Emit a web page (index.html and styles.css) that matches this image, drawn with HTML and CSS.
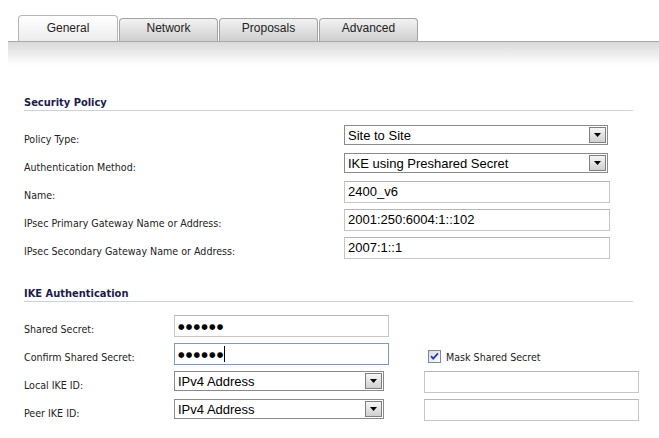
FILE: index.html
```html
<!DOCTYPE html>
<html>
<head>
<meta charset="utf-8">
<link rel="stylesheet" href="styles.css">
</head>
<body>
<div class="tabs">
  <div class="tab active">General</div>
  <div class="tab">Network</div>
  <div class="tab">Proposals</div>
  <div class="tab">Advanced</div>
</div>
<div class="tabbar"></div>

<div class="content">
  <div class="section-head first">Security Policy</div>
  <div class="rows policy">
    <div class="row">
      <div class="label">Policy Type:</div>
      <div class="select wide"><span class="val">Site to Site</span><span class="arrow"><svg width="7" height="4" viewBox="0 0 7 4"><path d="M0 0H7L3.5 4Z" fill="#000"/></svg></span></div>
    </div>
    <div class="row">
      <div class="label">Authentication Method:</div>
      <div class="select wide"><span class="val">IKE using Preshared Secret</span><span class="arrow"><svg width="7" height="4" viewBox="0 0 7 4"><path d="M0 0H7L3.5 4Z" fill="#000"/></svg></span></div>
    </div>
    <div class="row">
      <div class="label">Name:</div>
      <div class="input wide-in">2400_v6</div>
    </div>
    <div class="row">
      <div class="label">IPsec Primary Gateway Name or Address:</div>
      <div class="input wide-in">2001:250:6004:1::102</div>
    </div>
    <div class="row">
      <div class="label">IPsec Secondary Gateway Name or Address:</div>
      <div class="input wide-in">2007:1::1</div>
    </div>
  </div>

  <div class="section-head second">IKE Authentication</div>
  <div class="rows ike">
    <div class="row">
      <div class="label">Shared Secret:</div>
      <div class="input mid"><span class="dots">●●●●●●</span></div>
      <div></div>
    </div>
    <div class="row">
      <div class="label">Confirm Shared Secret:</div>
      <div class="input mid focus"><span class="dots">●●●●●●</span><span class="caret"></span></div>
      <div class="check">
        <svg width="13" height="13" viewBox="0 0 13 13"><defs><linearGradient id="cg" x1="0" y1="0" x2="1" y2="1"><stop offset="0" stop-color="#d8d8e0"/><stop offset="1" stop-color="#ffffff"/></linearGradient></defs><rect x="0.5" y="0.5" width="12" height="12" fill="url(#cg)" stroke="#7a8a99"/><path d="M3 6.2L5.2 8.6L10 3.4" fill="none" stroke="#2a3fa8" stroke-width="1.8"/></svg>
        <span>Mask Shared Secret</span>
      </div>
    </div>
    <div class="row">
      <div class="label">Local IKE ID:</div>
      <div class="select mid-s"><span class="val">IPv4 Address</span><span class="arrow"><svg width="7" height="4" viewBox="0 0 7 4"><path d="M0 0H7L3.5 4Z" fill="#000"/></svg></span></div>
      <div class="input mid"></div>
    </div>
    <div class="row">
      <div class="label">Peer IKE ID:</div>
      <div class="select mid-s"><span class="val">IPv4 Address</span><span class="arrow"><svg width="7" height="4" viewBox="0 0 7 4"><path d="M0 0H7L3.5 4Z" fill="#000"/></svg></span></div>
      <div class="input mid"></div>
    </div>
  </div>
</div>
</body>
</html>
```

FILE: styles.css
```css
* { box-sizing: border-box; }
html, body { margin: 0; padding: 0; background: #fff; }
body { width: 659px; height: 438px; overflow: hidden; }

.tabs {
  display: flex;
  align-items: flex-end;
  padding: 15px 0 0 18px;
  height: 41px;
}
.tab {
  width: 99px;
  height: 23px;
  margin-left: 1px;
  border: 1px solid #a3a3a3;
  border-bottom: none;
  border-radius: 4px 4px 0 0;
  background: linear-gradient(#f2f2f2, #cfcfcf);
  font: 12px "Liberation Sans", Arial, sans-serif;
  color: #222;
  text-align: center;
  line-height: 18px;
}
.tab.active {
  width: 100px;
  height: 26px;
  margin-left: 0;
  line-height: 24px;
  background: linear-gradient(#ffffff, #ececec);
  border-color: #b5b5b5;
}
.tabbar {
  margin-left: 8px;
  height: 24px;
  border-top: 1px solid #a9a9a9;
  background: linear-gradient(#d9d9d9, #ffffff);
}

.content {
  padding-left: 24px;
  width: 633px;
}
.section-head {
  font: bold 11px "DejaVu Sans Condensed", "DejaVu Sans", sans-serif;
  color: #1b1b4e;
  line-height: 14px;
  border-bottom: 1px solid #cdd3dc;
  padding-top: 1px;
}
.section-head.first { margin-top: 30px; }
.section-head.second { margin-top: 23px; }

.rows.policy { margin-top: 12px; }
.rows.ike { margin-top: 11px; }

.row {
  display: grid;
  height: 28px;
  align-items: start;
}
.policy .row { grid-template-columns: 320px 266px; }
.ike .row { grid-template-columns: 150px 215px 35px 215px; }
.ike .row > :nth-child(3) { grid-column: 4; }

.label {
  font: 10.6px "DejaVu Sans Condensed", "DejaVu Sans", sans-serif;
  color: #222;
  line-height: 14px;
  padding-top: 9px;
}

.select {
  margin-top: 2px;
  height: 20px;
  border: 1px solid #8a8a8a;
  display: flex;
  align-items: center;
  justify-content: space-between;
  background: #fff;
  font: 13px "Liberation Sans", Arial, sans-serif;
  color: #000;
}
.select .val { padding-left: 3px; }
.select .arrow {
  width: 17px;
  height: 16px;
  margin-right: 1px;
  border: 1px solid #7f7f7f;
  background: linear-gradient(#f6f6f6, #d0d0d0);
  display: flex;
  align-items: center;
  justify-content: center;
}
.select.wide { width: 264px; }
.select.mid-s { width: 210px; }

.input {
  margin-top: 2px;
  height: 22px;
  border: 1px solid #c6c6c6;
  border-top-color: #b6b6b6;
  background: #fff;
  font: 13px "Liberation Sans", Arial, sans-serif;
  color: #000;
  line-height: 20px;
  padding-left: 3px;
  display: flex;
  align-items: center;
}
.input.wide-in { width: 266px; }
.input.mid { width: 215px; }
.input.focus { border-color: #7d9ab8; }

.dots {
  font: 7.5px "DejaVu Sans", sans-serif;
  letter-spacing: 1.2px;
  color: #000;
}
.caret {
  width: 1px;
  height: 16px;
  background: #000;
  margin-left: 0;
}

.check {
  grid-column: 4;
  display: flex;
  align-items: center;
  gap: 5px;
  padding: 9px 0 0 4px;
  font: 10.6px "DejaVu Sans Condensed", "DejaVu Sans", sans-serif;
  color: #222;
}
.check svg { flex: none; }
```
